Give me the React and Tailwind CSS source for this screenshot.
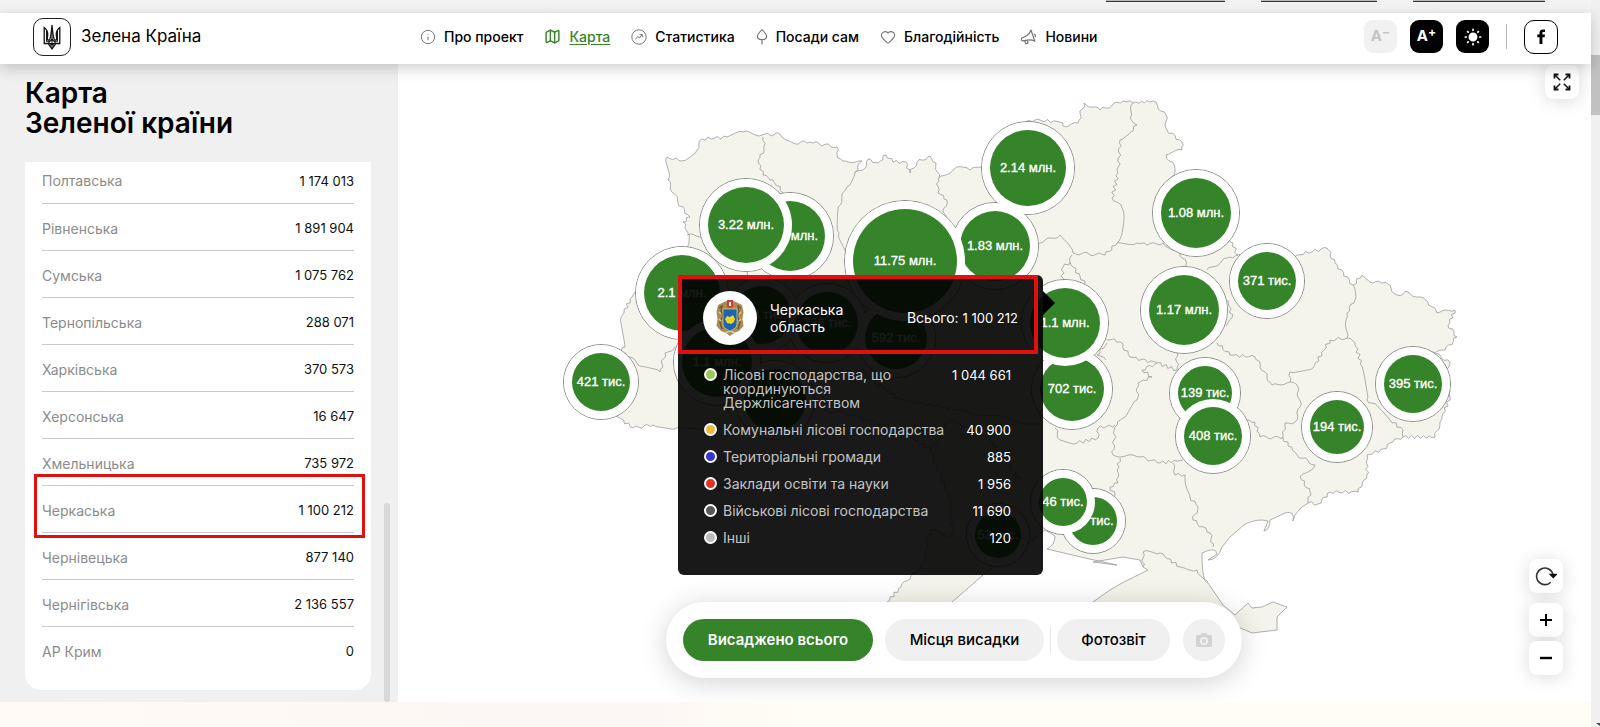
import React from "react";
import { Heart, Info, Map as MapIcon } from "lucide-react";

const navItems = [
  { label: "Про проект", icon: "info" },
  { label: "Карта", icon: "map", active: true },
  { label: "Статистика", icon: "stats" },
  { label: "Посади сам", icon: "tree" },
  { label: "Благодійність", icon: "heart" },
  { label: "Новини", icon: "news" },
];

const regions = [
  ["Полтавська", "1 174 013"],
  ["Рівненська", "1 891 904"],
  ["Сумська", "1 075 762"],
  ["Тернопільська", "288 071"],
  ["Харківська", "370 573"],
  ["Херсонська", "16 647"],
  ["Хмельницька", "735 972"],
  ["Черкаська", "1 100 212"],
  ["Чернівецька", "877 140"],
  ["Чернігівська", "2 136 557"],
  ["АР Крим", "0"],
];

const categories = [
  { label: "Лісові господарства, що координуються Держлісагентством", value: "1 044 661", color: "bg-[#9bc75c]" },
  { label: "Комунальні лісові господарства", value: "40 900", color: "bg-[#f0b93c]" },
  { label: "Територіальні громади", value: "885", color: "bg-[#3434d6]" },
  { label: "Заклади освіти та науки", value: "1 956", color: "bg-[#e6301f]" },
  { label: "Військові лісові господарства", value: "11 690", color: "bg-[#585858]" },
  { label: "Інші", value: "120", color: "bg-[#bdbdbd]" },
];

// x, y, radius, label; later ones lie on top
const bubbles = [
  [790, 236, 35, "1.89 млн."],
  [746, 225, 38, "3.22 млн."],
  [682, 293, 38, "2.1 млн."],
  [601, 382, 29, "421 тис."],
  [762, 315, 29, "288 тис."],
  [827, 323, 31, "736 тис."],
  [896, 338, 31, "592 тис."],
  [717, 362, 35, "1.1 млн."],
  [775, 400, 31, ""],
  [995, 246, 35, "1.83 млн."],
  [905, 261, 52, "11.75 млн."],
  [1028, 168, 38, "2.14 млн."],
  [1196, 213, 35, "1.08 млн."],
  [1267, 281, 29, "371 тис."],
  [1184, 310, 35, "1.17 млн."],
  [1072, 389, 32, "702 тис."],
  [1065, 323, 35, "1.1 млн."],
  [1205, 393, 27, "139 тис."],
  [1213, 436, 29, "408 тис."],
  [1337, 427, 27, "194 тис."],
  [1413, 384, 29, "395 тис."],
  [998, 535, 23, "53 тис."],
  [1093, 521, 24, "16 тис."],
  [1063, 502, 24, "46 тис."],
];

const country =
  "667,157 682,161 697,150 702,139 727,137 743,132 762,135 780,134 793,143 810,142 837,147 837,155 843,161 862,161 855,172 863,170 868,159 878,163 886,155 893,162 906,162 910,173 917,162 930,156 936,163 939,178 957,167 970,170 990,166 1003,130 1035,120 1060,122 1063,126 1078,123 1084,103 1100,110 1123,101 1133,103 1153,101 1166,115 1167,130 1182,142 1182,150 1166,155 1175,168 1172,177 1210,225 1233,243 1237,255 1265,262 1297,255 1327,248 1335,263 1353,285 1362,275 1373,283 1385,282 1397,295 1408,292 1428,302 1437,313 1455,310 1448,325 1457,337 1445,350 1432,352 1450,362 1445,370 1450,397 1440,422 1435,437 1403,437 1390,443 1387,448 1367,455 1367,475 1358,492 1330,492 1318,504 1308,503";
const coast =
  "M1308,503 Q1300,507 1295,515 L1293,521 Q1295,510 1285,513 L1270,520 Q1270,530 1264,531 L1268,521 Q1258,518 1245,524 L1230,537 L1222,547 Q1218,560 1208,560 L1217,554 Q1216,546 1202,553 Q1202,583 1208,583 L1223,605 L1235,615 L1248,603 L1252,608 L1262,607 L1273,602 L1287,607 L1277,617 L1277,630 L1252,633 L1238,627 L1200,645 L1130,650 L1085,620 L1093,602 L1110,590 L1122,583 L1148,570 L1143,567 L1140,560 L1123,557 L1093,562 L1117,565 L1085,558 L1047,549 Q1055,545 1055,536 L1045,530 L1020,550 L1000,562 L983,575 Q966,590 952,602 L940,635 L890,635";
const southWest =
  "880,625 887,602 901,587 913,573 922,568 930,530 953,537 950,500 930,450 900,430 850,415 800,405 740,430 677,428 653,425 633,428 618,417 600,400 600,375 625,347 621,317 632,297 678,253 687,247 688,233 683,222 690,217 678,203 668,180 667,157";

const borders = [
  "763,137 764,150 758,160 763,175 773,180 785,195",
  "855,172 847,187 838,207 839,233 845,255 855,290",
  "938,178 938,193 947,200 943,212 950,224",
  "1133,103 1130,118 1137,125 1128,135 1120,140 1118,173 1112,198 1122,208 1123,227 1117,243 1105,255 1073,253 1060,235 1040,243 1030,248",
  "1117,243 1137,243 1147,245 1163,243 1180,253 1190,270",
  "1207,270 1227,258 1238,255",
  "1072,255 1070,262 1085,284",
  "1062,282 1063,267 1070,262",
  "1105,338 1120,342 1130,357 1157,363 1177,370 1177,353",
  "1157,363 1142,370 1152,377 1138,383 1137,400 1123,418 1115,427 1113,455 1140,457 1160,463 1183,460",
  "1217,343 1230,355 1255,357 1272,385 1290,382 1290,372 1313,368 1330,340 1347,338",
  "1353,285 1355,300 1347,313 1347,338 1355,343 1363,370 1367,400 1372,403 1390,420 1403,430 1403,437",
  "1290,382 1298,387 1300,407 1295,422 1285,423 1283,438 1260,437 1255,422 1247,420",
  "1283,438 1297,455 1315,465 1300,477 1310,492 1308,503",
  "1173,463 1175,475 1185,475 1190,497 1198,507 1193,520 1210,533 1213,547",
  "1120,458 1117,470 1118,483 1110,487 1115,495 1108,502",
  "1143,567 1143,552 1160,553 1180,567 1197,570 1208,582",
  "1055,428 1060,440 1077,443 1098,438 1098,428 1115,425",
  "1107,343 1097,355 1106,360",
  "1228,300 1232,318 1226,326",
  "620,352 630,357 638,365 660,372 665,353 675,347",
  "687,235 700,237 714,240",
  "745,270 755,300 790,350 800,405",
  "860,370 900,400 960,410 1040,425",
  "930,450 950,420 990,440 1020,480",
];

// breaks every straight run into short uneven steps, the same way on every render
const roughen = (points) => {
  const pts = points.split(" ").map((p) => p.split(",").map(Number));
  const out = [pts[0]];
  for (let i = 1; i < pts.length; i++) {
    const [x0, y0] = pts[i - 1];
    const [x1, y1] = pts[i];
    const len = Math.hypot(x1 - x0, y1 - y0);
    const steps = Math.max(1, Math.round(len / 3));
    for (let s = 1; s <= steps; s++) {
      const t = s / steps;
      const x = x0 + (x1 - x0) * t;
      const y = y0 + (y1 - y0) * t;
      const noise = s === steps ? 0 : Math.sin(x * 57.3 + y * 78.2) * 1.6;
      out.push([x - ((y1 - y0) / len) * noise, y + ((x1 - x0) / len) * noise]);
    }
  }
  return out.map(([x, y]) => `${x.toFixed(1)},${y.toFixed(1)}`).join(" L");
};

const countryPath = `M${roughen(country)} ${coast.replace("M1308,503", "")} L${roughen(southWest)} Z`;

const NavIcon = ({ name }) => {
  if (name === "info") return <Info size={16} strokeWidth={1.5} />;
  if (name === "map") return <MapIcon size={17} strokeWidth={2} />;
  if (name === "heart") return <Heart size={16} strokeWidth={1.7} />;
  if (name === "news") {
    return (
      <svg width="17" height="16" viewBox="0 0 17 16" fill="none" stroke="currentColor" strokeWidth="1.2" strokeLinejoin="round">
        <path d="M11 1 14.800 12.200C12 10.600 9 10.500 5.600 11.300L3 11.900C1.300 12.200.5 9.400 2.200 8.700L4.600 7.700C7.600 6.500 9.800 4.400 11 1Z" />
        <path d="M4.600 11.600 5.800 14.800 8 14.200 7.200 11M14 5.200C15.400 5.600 15.900 7.200 14.900 8.200" />
      </svg>
    );
  }
  if (name === "stats") {
    return (
      <svg width="16" height="16" viewBox="0 0 16 16" fill="none" stroke="currentColor">
        <circle cx="8" cy="8" r="7.2" />
        <path d="M4.3 10.4 6.6 7.500 8.400 9 11 5.800M8.600 5.600H11.300V8.300" />
      </svg>
    );
  }
  return (
    <svg width="12" height="16" viewBox="0 0 12 16" fill="none" stroke="currentColor" strokeWidth="1.2">
      <path d="M6 .8C4 2.600 1.400 4.800 1.400 7.200c0 2 1.600 3.400 4.600 3.400s4.600-1.400 4.600-3.400C10.600 4.800 8 2.600 6 .8ZM6 10.600V15.600" />
    </svg>
  );
};

const Trident = () => (
  <svg width="18" height="26" viewBox="0 0 18 26" fill="none" stroke="#111" strokeWidth="1.3">
    <path d="M1.200 3.500V19.500H5.500C6 21.500 7.300 22.300 9 24.800C10.700 22.300 12 21.500 12.500 19.500H16.800V3.500C14 5.500 13 8 13.300 11.500L13.800 14.500C13.800 16 12.600 16.300 11.500 16C10 13.500 9.600 8 9 1C8.400 8 8 13.500 6.500 16C5.400 16.300 4.200 16 4.200 14.500L4.700 11.500C5 8 4 5.500 1.200 3.500Z" />
    <path d="M3.600 7V17.200H6.500M14.400 7V17.200H11.500M9 8V24M5.500 19.500C6 17.500 8 17 9 14.500C10 17 12 17.500 12.500 19.500M6 19.500H12M7 21.500 9 19.500 11 21.500" strokeWidth="1.100" />
  </svg>
);

const Emblem = () => (
  <svg width="30" height="38" viewBox="0 0 30 38">
    <path d="M3 6 9 3 15 1l6 2 6 3 1.500 7-1 7 1 7-4.500 5-5 2-4 3-4-3-5-2-4.500-5 1-7-1-7Z" fill="#a98d55" />
    <path d="M4 9 7 7 6 12 8 17 5 23 7 30M26 9 23 7 24 12 22 17 25 23 23 30" stroke="#6d5632" strokeWidth="1.400" fill="none" />
    <path d="M4 13 6 15M4 20 6 22M26 13 24 15M26 20 24 22M10 34 15 32 20 34" stroke="#e0cd92" strokeWidth="1.400" fill="none" />
    <path d="M8 10H22V24C22 29 19 30 15 32C11 30 8 29 8 24Z" fill="#1766b5" stroke="#d8c078" strokeWidth=".8" />
    <path d="m10 20 2-3 3 1 3-2 2 4-1 3-3 2-4-1Z" fill="#f4d21f" />
    <path d="M12 1H18V8L15 9 12 8Z" fill="#d63a2c" />
    <path d="M14 3H16V7H14Z" fill="#fff" />
  </svg>
);

const Header = () => (
  <header className="relative z-20 flex h-[51px] items-center bg-white pl-[33px] pr-[33px] pb-1 shadow-[0_4px_14px_rgba(0,0,0,0.2)]">
    <a href="#home" className="flex w-[387px] items-center gap-[10px] text-[17px]">
      <span className="flex size-[38px] items-center justify-center rounded-[10px] border border-[#222]">
        <Trident />
      </span>
      Зелена Країна
    </a>
    <nav className="flex items-center gap-[21px] text-sm font-medium">
      {navItems.map((item) => (
        <a key={item.label} href="#nav" className={item.active ? "flex items-center gap-2 text-[#35842a]" : "flex items-center gap-2"}>
          <span className={item.active ? "" : "text-[#777]"}>
            <NavIcon name={item.icon} />
          </span>
          <span className={item.active ? "underline underline-offset-2" : ""}>{item.label}</span>
        </a>
      ))}
    </nav>
    <div className="ml-auto flex items-center gap-[13px]">
      <button type="button" disabled className="flex size-[33px] justify-center rounded-[9px] bg-[#f1f1f1] pt-1 text-[15px] leading-6 font-bold text-[#c4c4c4]">
        A<sup className="top-0 text-xs leading-4">−</sup>
      </button>
      <button type="button" className="flex size-[33px] justify-center rounded-[9px] bg-black pt-1 text-[15px] leading-6 font-bold text-white">
        A<sup className="top-0 text-xs leading-4">+</sup>
      </button>
      <button type="button" aria-label="Контраст" className="flex size-[33px] items-center justify-center rounded-[9px] bg-black text-white">
        <svg width="18" height="18" viewBox="0 0 18 18" stroke="currentColor" strokeWidth="1.700" strokeLinecap="round">
          <circle cx="9" cy="9" r="3.600" fill="currentColor" />
          <path d="M9 1.300V2.300M9 15.700V16.700M1.300 9H2.300M15.700 9H16.700M3.600 3.600 4.200 4.200M13.800 13.800 14.400 14.400M3.600 14.400 4.200 13.800M13.800 4.200 14.400 3.600" />
        </svg>
      </button>
      <span className="mx-1 h-[25px] w-px bg-[#bbb]" />
      <a href="#facebook" aria-label="Facebook" className="flex size-[34px] items-center justify-center rounded-[10px] border border-black">
        <svg width="9" height="15" viewBox="0 0 9 15">
          <path d="M2.500 15V8.300H.3V5.600H2.500V3.900C2.500 1.500 3.900.4 6 .4L8 .5V2.900H6.700C5.600 2.900 5.400 3.400 5.400 4.200V5.600H8L7.600 8.300H5.400V15Z" />
        </svg>
      </a>
    </div>
  </header>
);

const Sidebar = () => (
  <aside className="relative flex w-[398px] shrink-0 flex-col bg-[#f0f0f0] pl-[25px] pr-[27px] pb-3 pt-[14px]">
    <h1 className="text-[28px] font-semibold leading-[30px]">
      Карта
      <br />
      Зеленої країни
    </h1>
    <div className="relative mt-6 flex-1">
      <div className="h-full overflow-hidden rounded-b-2xl bg-white px-[17px]">
        <table className="-mt-[6px] w-full text-sm">
          <tbody>
            {regions.map(([name, total]) => (
              <tr key={name} className="h-[47px] border-b border-[#c9c9c9] last:border-0">
                <th scope="row" className="pt-1 text-left font-normal text-[#8c8c8c]">{name}</th>
                <td className="pt-1 text-right text-[13px] text-[#111]">{total}</td>
              </tr>
            ))}
          </tbody>
        </table>
      </div>
      <div className="absolute left-[9px] right-[6px] top-[312px] h-16 border-[3px] border-[#e01010]" />
    </div>
    <div className="absolute bottom-0 right-2 h-[199px] w-[6px] rounded-full bg-[#d8d8d8]" />
  </aside>
);

const UkraineMap = () => (
  <svg className="h-full w-full" viewBox="398 64 1193 638" preserveAspectRatio="xMidYMid slice">
    <path d={countryPath} fill="#f4f4ec" stroke="#9c9c9c" strokeWidth=".8" />
    <g fill="none" stroke="#9c9c9c" strokeWidth=".8">
      {borders.map((line) => (
        <path key={line} d={`M${roughen(line)}`} />
      ))}
    </g>
    {bubbles.map(([x, y, r]) => (
      <circle key={`${x}-${y}`} cx={x} cy={y} r={r + 8.5} fill="none" stroke="#8c8c8c" />
    ))}
    {bubbles.map(([x, y, r, label]) => (
      <g key={`${x}-${y}`}>
        <circle cx={x} cy={y} r={r + 8} fill="#fff" />
        <circle cx={x} cy={y} r={r} fill="#35842a" />
        {label && (
          <text x={x} y={y + 4} textAnchor="middle" className="fill-white stroke-white font-['Liberation_Sans'] text-[13px]" strokeWidth=".35">
            {label}
          </text>
        )}
      </g>
    ))}
  </svg>
);

const RegionTooltip = () => (
  <div className="absolute left-[280px] top-[211px] h-[300px] w-[365px] rounded-md bg-black/90 text-white">
    <div className="absolute -right-3 top-[16px] h-6 w-3 bg-black [clip-path:polygon(0_0,100%_50%,0_100%)]" />
    <div className="flex h-[79px] w-[360px] items-center border-4 border-[#e01010] pl-[21px] pr-4 pt-[6px] text-sm leading-[17px]">
      <span className="flex size-[54px] shrink-0 items-center justify-center rounded-full bg-white">
        <Emblem />
      </span>
      <span className="ml-[13px] w-[80px]">Черкаська область</span>
      <span className="ml-auto whitespace-nowrap">
        Всього: <span className="text-[13px]">1 100 212</span>
      </span>
    </div>
    <ul className="flex flex-col gap-[13px] pl-[26px] pr-[32px] pt-[14px] text-sm leading-[14px]">
      {categories.map((item) => (
        <li key={item.label} className="flex items-start">
          <span className={`mr-[6px] size-[13px] shrink-0 rounded-full border-2 border-white ${item.color}`} />
          <span className="max-w-[228px] text-[#c4c4c4]">{item.label}</span>
          <span className="ml-auto whitespace-nowrap text-[13px]">{item.value}</span>
        </li>
      ))}
    </ul>
  </div>
);

const LayerSwitch = () => (
  <div className="absolute bottom-6 left-[268px] flex h-[76px] items-center rounded-full bg-white pl-[17px] pr-[17px] text-[15px] font-medium shadow-[0_4px_28px_rgba(0,0,0,0.18)]">
    <button type="button" className="h-[42px] w-[190px] rounded-full bg-[#35842a] font-semibold text-white">Висаджено всього</button>
    <button type="button" className="ml-3 h-[42px] w-[159px] rounded-full bg-[#f0f0f0]">Місця висадки</button>
    <span className="mx-[6px] h-[26px] w-px bg-[#e8e8e8]" />
    <button type="button" className="h-[42px] w-[113px] rounded-full bg-[#f0f0f0]">Фотозвіт</button>
    <button type="button" disabled aria-label="Фото" className="ml-[13px] flex size-[42px] items-center justify-center rounded-full bg-[#f0f0f0]">
      <svg width="16" height="14" viewBox="0 0 16 14" fill="#d3d3d3">
        <path fillRule="evenodd" d="M4.500 2 5.500 0h5l1 2H14.500Q16 2 16 3.500V12.500Q16 14 14.500 14H1.500Q0 14 0 12.500V3.500Q0 2 1.500 2ZM8 4a4 4 0 1 0 0 8 4 4 0 0 0 0-8Z" />
        <circle cx="8" cy="8" r="2.200" />
      </svg>
    </button>
  </div>
);

const toolButton = "flex size-[34px] items-center justify-center rounded-lg bg-white shadow-[0_2px_18px_rgba(0,0,0,0.15)]";

const MapTools = () => (
  <>
    <button type="button" aria-label="На весь екран" className={`${toolButton} absolute right-3 top-px`}>
      <svg width="18" height="18" viewBox="0 0 18 18" fill="none" stroke="#111" strokeWidth="1.800">
        <path d="M1.500 5.500V1.500H5.500M12.500 1.500H16.500V5.500M16.500 12.500V16.500H12.500M5.500 16.500H1.500V12.500" />
        <path d="M1.500 1.500 7.200 7.200M16.500 1.500 10.800 7.200M16.500 16.500 10.800 10.800M1.500 16.500 7.200 10.800" strokeWidth="1.500" />
      </svg>
    </button>
    <div className="absolute bottom-[27px] right-7 flex flex-col">
      <button type="button" aria-label="Скинути" className={`${toolButton} mb-[10px]`}>
        <svg width="22" height="20" viewBox="0 0 22 20" fill="none" stroke="#333" strokeWidth="1.600">
          <path d="M15.800 16.200A8.300 8.300 0 1 1 18 8.500" />
          <path d="M15.500 8.500H21L18.200 11.300Z" fill="#111" stroke="#111" />
        </svg>
      </button>
      <button type="button" aria-label="Наблизити" className={`${toolButton} mb-1`}>
        <svg width="12" height="12" viewBox="0 0 12 12" stroke="#000" strokeWidth="2">
          <path d="M6 0V12M0 6H12" />
        </svg>
      </button>
      <button type="button" aria-label="Віддалити" className={toolButton}>
        <svg width="12" height="12" viewBox="0 0 12 12" stroke="#000" strokeWidth="2.400">
          <path d="M0 6H12" />
        </svg>
      </button>
    </div>
  </>
);

const App = () => {
  return (
    <div className="flex min-h-screen bg-white font-['Inter','Noto_Sans',sans-serif] text-black">
      <div className="flex min-w-0 flex-1 flex-col">
        <div className="flex h-[13px] items-start justify-end gap-9 bg-[#f3f3f3] pr-[46px]">
          <a href="#top" aria-label="Мапа сайту" className="h-[2px] w-[119px] border-b border-[#333] bg-[#bbb]" />
          <a href="#top" aria-label="Про портал" className="h-[2px] w-[116px] border-b border-[#333] bg-[#bbb]" />
          <a href="#top" aria-label="Зворотній зв'язок" className="h-[2px] w-[132px] border-b border-[#333] bg-[#bbb]" />
        </div>
        <Header />
        <main className="flex h-[638px]">
          <Sidebar />
          <section className="relative min-w-0 flex-1 overflow-hidden bg-white">
            <UkraineMap />
            <LayerSwitch />
            <RegionTooltip />
            <MapTools />
          </section>
        </main>
        <div className="flex-1 bg-linear-to-r from-[#fffaf5] via-[#fcf6f4] via-40% to-[#fffdf5] to-50%" />
      </div>
      <div className="flex w-[9px] flex-col justify-between bg-[#f0f0f0] pt-[55px]">
        <div className="h-[60px] bg-[#c1c1c1]" />
        <svg className="self-end" width="4" height="4" viewBox="0 0 4 4">
          <path d="M0 0H4V3Z" fill="#444" />
        </svg>
      </div>
    </div>
  );
};

export default App;
